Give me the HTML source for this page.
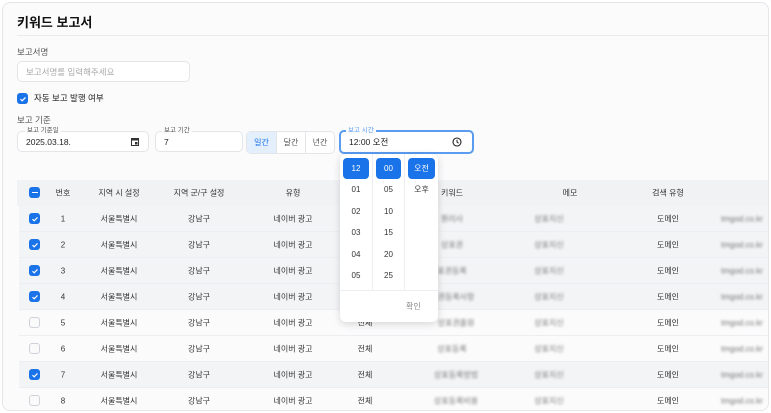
<!DOCTYPE html>
<html><head><meta charset="utf-8">
<style>
*{box-sizing:border-box;margin:0;padding:0}
body{width:771px;height:413px;background:#fff;font-family:"Liberation Sans","Noto Sans CJK KR",sans-serif;position:relative;overflow:hidden;color:#222}
.card{position:absolute;left:2px;top:2px;width:767px;height:409px;border:1px solid #e4e6ea;border-radius:8px;background:#fbfbfc;overflow:hidden}
.abs{position:absolute}
.title{left:14px;top:9px;font-size:13px;font-weight:bold;color:#111}
.hr{left:14px;top:32px;width:760px;height:1px;background:#e8eaee}
.lbl{font-size:8.5px;color:#555}
.input{border:1px solid #e3e5e9;border-radius:5px;background:#fff;font-size:8.5px;color:#222;padding-left:8px;display:flex;align-items:center}
.cb{width:11px;height:11px;border-radius:3px;background:#1a73e8;display:flex;align-items:center;justify-content:center}
.cbe{width:11px;height:11px;border-radius:3px;border:1px solid #cfd3d9;background:#fafafa}
.fl{font-size:6.5px;color:#555;background:#fbfbfc;padding:0 2px;line-height:7px}
.seg{display:flex;border:1px solid #e3e5e9;border-radius:5px;overflow:hidden;background:#fff}
.seg div{width:29px;height:21px;display:flex;align-items:center;justify-content:center;font-size:8px;color:#555;border-left:1px solid #e3e5e9}
.seg div:first-child{border-left:none;background:#e3effc;color:#1a73e8}
.row{left:16px;width:760px;height:26px;border-bottom:1px solid #eceef1;font-size:8px;color:#333}
.row span{position:absolute;top:50%;transform:translate(-50%,-50%);white-space:nowrap}
.row .c{position:absolute;left:10px;top:7px}
.blur{filter:blur(1.4px);color:#777}
.pop{left:339px;top:152px;width:98px;height:168px;background:#fff;border-radius:6px;box-shadow:0 2px 8px rgba(0,0,0,.15);overflow:hidden}
.col{position:absolute;top:0;height:136px;font-size:8px;color:#333}
.col div{height:21.5px;display:flex;align-items:center;justify-content:center}
.col .sel{background:#1a73e8;color:#fff;border-radius:4px;margin:4px 3px 0;height:21px}
</style></head><body>
<div class="card">
<div class="abs title">키워드 보고서</div>
<div class="abs hr"></div>
<div class="abs lbl" style="left:14px;top:43px">보고서명</div>
<div class="abs input" style="left:14px;top:58px;width:173px;height:21px;color:#aaa">보고서명를 입력해주세요</div>
<div class="abs cb" style="left:14px;top:90px"><svg width="8" height="8" viewBox="0 0 8 8"><path d="M1.5 4.2l1.7 1.6 3.3-3.4" stroke="#fff" stroke-width="1.2" fill="none"/></svg></div>
<div class="abs" style="left:31px;top:89px;font-size:8.5px;color:#222">자동 보고 발행 여부</div>
<div class="abs lbl" style="left:14px;top:111px">보고 기준</div>
<div class="abs input" style="left:14px;top:128px;width:132px;height:21px">2025.03.18.<svg style="position:absolute;right:9px;top:6px" width="8" height="8" viewBox="0 0 8 8"><rect x="0.5" y="0.5" width="7" height="7" fill="none" stroke="#333"/><rect x="0.5" y="0.5" width="7" height="2" fill="#333"/><rect x="4" y="4" width="2.5" height="2.5" fill="#333"/></svg></div>
<div class="abs fl" style="left:22px;top:124px">보고 기준일</div>
<div class="abs input" style="left:152px;top:128px;width:88px;height:21px">7</div>
<div class="abs fl" style="left:159px;top:124px">보고 기간</div>
<div class="abs seg" style="left:243px;top:128px"><div>일간</div><div>달간</div><div>년간</div></div>
<div class="abs input" style="left:336px;top:127px;width:135px;height:24px;border:2px solid #5b9cf0">12:00 오전<svg style="position:absolute;right:10px;top:5px" width="10" height="10" viewBox="0 0 10 10"><circle cx="5" cy="5" r="4" fill="none" stroke="#222" stroke-width="1.1"/><path d="M5 2.7V5l1.6 1.2" stroke="#222" stroke-width="1" fill="none"/></svg></div>
<div class="abs fl" style="left:343px;top:124px;color:#5b9cf0">보고 시간</div>

<div class="abs" style="left:14px;top:177px;width:760px;height:26px;background:#f1f2f4"></div>
<div class="abs row" style="top:177px;border:none"><div class="c"><div class="cb"><div style="width:6px;height:1.5px;background:#fff"></div></div></div>
<span style="left:44px">번호</span><span style="left:100px">지역 시 설정</span><span style="left:180px">지역 군/구 설정</span><span style="left:274px">유형</span><span style="left:433px">키워드</span><span style="left:551px">메모</span><span style="left:649px">검색 유형</span></div>

<div class="abs" style="top:203px;left:0;width:780px">
<div class="abs row" style="top:0;background:#f3f4f6"><div class="c"><div class="cb"><svg width="8" height="8"><path d="M1.5 4.2l1.7 1.6 3.3-3.4" stroke="#fff" stroke-width="1.2" fill="none"/></svg></div></div><span style="left:44px">1</span><span style="left:100px">서울특별시</span><span style="left:180px">강남구</span><span style="left:274px">네이버 광고</span><span style="left:346px">전체</span><span class="blur" style="left:433px">뭔리사</span><span class="blur" style="left:530px">상표지신</span><span style="left:649px">도메인</span><span class="blur" style="left:723px">tmgod.co.kr</span></div>
<div class="abs row" style="top:26px;background:#f3f4f6"><div class="c"><div class="cb"><svg width="8" height="8"><path d="M1.5 4.2l1.7 1.6 3.3-3.4" stroke="#fff" stroke-width="1.2" fill="none"/></svg></div></div><span style="left:44px">2</span><span style="left:100px">서울특별시</span><span style="left:180px">강남구</span><span style="left:274px">네이버 광고</span><span style="left:346px">전체</span><span class="blur" style="left:433px">상표권</span><span class="blur" style="left:530px">상표지신</span><span style="left:649px">도메인</span><span class="blur" style="left:723px">tmgod.co.kr</span></div>
<div class="abs row" style="top:52px;background:#f3f4f6"><div class="c"><div class="cb"><svg width="8" height="8"><path d="M1.5 4.2l1.7 1.6 3.3-3.4" stroke="#fff" stroke-width="1.2" fill="none"/></svg></div></div><span style="left:44px">3</span><span style="left:100px">서울특별시</span><span style="left:180px">강남구</span><span style="left:274px">네이버 광고</span><span style="left:346px">전체</span><span class="blur" style="left:433px">표권등록</span><span class="blur" style="left:530px">상표지신</span><span style="left:649px">도메인</span><span class="blur" style="left:723px">tmgod.co.kr</span></div>
<div class="abs row" style="top:78px;background:#f3f4f6"><div class="c"><div class="cb"><svg width="8" height="8"><path d="M1.5 4.2l1.7 1.6 3.3-3.4" stroke="#fff" stroke-width="1.2" fill="none"/></svg></div></div><span style="left:44px">4</span><span style="left:100px">서울특별시</span><span style="left:180px">강남구</span><span style="left:274px">네이버 광고</span><span style="left:346px">전체</span><span class="blur" style="left:437px">권등록사항</span><span class="blur" style="left:530px">상표지신</span><span style="left:649px">도메인</span><span class="blur" style="left:723px">tmgod.co.kr</span></div>
<div class="abs row" style="top:104px;background:#fbfbfc"><div class="c"><div class="cbe"></div></div><span style="left:44px">5</span><span style="left:100px">서울특별시</span><span style="left:180px">강남구</span><span style="left:274px">네이버 광고</span><span style="left:346px">전체</span><span class="blur" style="left:437px">상표권출원</span><span class="blur" style="left:530px">상표지신</span><span style="left:649px">도메인</span><span class="blur" style="left:723px">tmgod.co.kr</span></div>
<div class="abs row" style="top:130px;background:#fbfbfc"><div class="c"><div class="cbe"></div></div><span style="left:44px">6</span><span style="left:100px">서울특별시</span><span style="left:180px">강남구</span><span style="left:274px">네이버 광고</span><span style="left:346px">전체</span><span class="blur" style="left:433px">상표등록</span><span class="blur" style="left:530px">상표지신</span><span style="left:649px">도메인</span><span class="blur" style="left:723px">tmgod.co.kr</span></div>
<div class="abs row" style="top:156px;background:#f3f4f6"><div class="c"><div class="cb"><svg width="8" height="8"><path d="M1.5 4.2l1.7 1.6 3.3-3.4" stroke="#fff" stroke-width="1.2" fill="none"/></svg></div></div><span style="left:44px">7</span><span style="left:100px">서울특별시</span><span style="left:180px">강남구</span><span style="left:274px">네이버 광고</span><span style="left:346px">전체</span><span class="blur" style="left:437px">상표등록방법</span><span class="blur" style="left:530px">상표지신</span><span style="left:649px">도메인</span><span class="blur" style="left:723px">tmgod.co.kr</span></div>
<div class="abs row" style="top:182px;background:#fbfbfc"><div class="c"><div class="cbe"></div></div><span style="left:44px">8</span><span style="left:100px">서울특별시</span><span style="left:180px">강남구</span><span style="left:274px">네이버 광고</span><span style="left:346px">전체</span><span class="blur" style="left:437px">상표등록비용</span><span class="blur" style="left:530px">상표지신</span><span style="left:649px">도메인</span><span class="blur" style="left:723px">tmgod.co.kr</span></div>
</div>

<div class="abs pop" style="left:337px;top:151px">
<div class="col" style="left:0;width:33px;border-right:1px solid #eceef1"><div class="sel">12</div><div>01</div><div>02</div><div>03</div><div>04</div><div>05</div></div>
<div class="col" style="left:33px;width:32px;border-right:1px solid #eceef1"><div class="sel">00</div><div>05</div><div>10</div><div>15</div><div>20</div><div>25</div></div>
<div class="col" style="left:65px;width:33px"><div class="sel">오전</div><div>오후</div></div>
<div class="abs" style="left:0;top:136px;width:98px;height:1px;background:#eceef1"></div>
<div class="abs" style="left:66px;top:147px;font-size:8px;color:#888">확인</div>
</div>
</div>
</body></html>
